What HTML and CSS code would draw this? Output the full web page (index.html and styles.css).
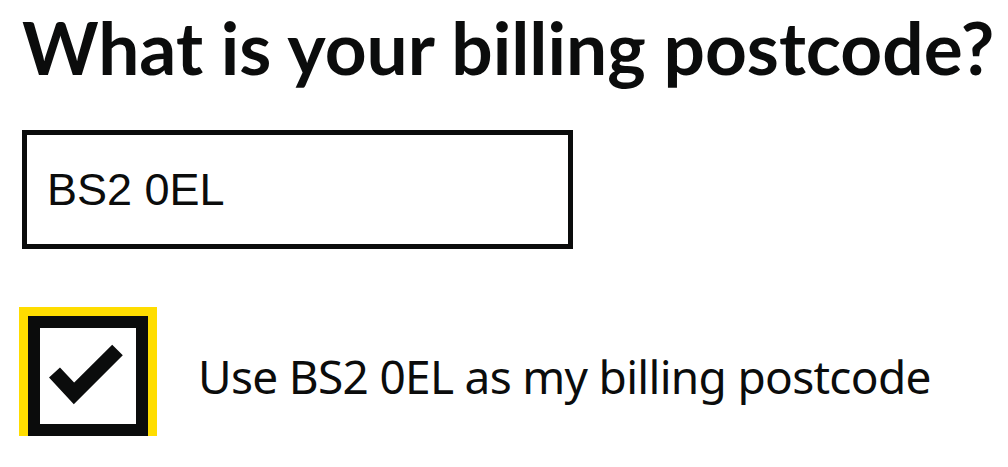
FILE: index.html
```html
<!DOCTYPE html>
<html lang="en">
<head>
<meta charset="utf-8">
<title>Billing postcode</title>
<link rel="stylesheet" href="styles.css">
</head>
<body>
<main class="page">
  <h1 class="heading">What is your billing postcode?</h1>
  <div class="field">
    <input class="text-input" type="text" value="BS2 0EL" aria-label="Billing postcode">
  </div>
  <div class="checkbox-row">
    <span class="checkbox-box" aria-hidden="true">
      <svg class="check" width="96" height="96" viewBox="0 0 96 96">
        <polyline points="14.5,44.5 34,65.4 77.5,22" fill="none" stroke="#0b0c0c" stroke-width="15" stroke-linejoin="miter" stroke-linecap="butt"/>
      </svg>
    </span>
    <span class="checkbox-label">Use BS2 0EL as my billing postcode</span>
  </div>
</main>
</body>
</html>
```
FILE: styles.css
```css
html, body {
  margin: 0;
  padding: 0;
  background: #ffffff;
  color: #0b0c0c;
}

.page {
  padding: 0 0 0 22px;
  display: flex;
  flex-direction: column;
}

.heading {
  margin: 0;
  padding-top: 4px;
  font-family: Lato, "Noto Sans", "Liberation Sans", sans-serif;
  font-weight: 700;
  font-size: 73px;
  line-height: 86px;
  letter-spacing: 0;
  white-space: nowrap;
}

.field {
  margin-top: 40px;
}

.text-input {
  display: block;
  box-sizing: border-box;
  width: 551px;
  height: 119px;
  margin: 0;
  border: 5px solid #0b0c0c;
  border-radius: 0;
  padding: 0 0 0 20px;
  font-family: "Liberation Sans", Arial, sans-serif;
  font-size: 45px;
  color: #0b0c0c;
  background: #ffffff;
  outline: none;
}

.checkbox-row {
  margin-top: 67px;
  margin-left: 6px;
  display: flex;
  align-items: center;
  gap: 50px;
}

.checkbox-box {
  box-sizing: border-box;
  width: 120px;
  height: 120px;
  border: 12px solid #0b0c0c;
  box-shadow: 0 0 0 9px #ffdd00;
  background: #ffffff;
  flex: none;
  display: block;
}

.check {
  display: block;
}

.checkbox-label {
  font-family: "Noto Sans", "Liberation Sans", sans-serif;
  font-size: 46px;
  line-height: 60px;
  letter-spacing: -0.7px;
  color: #0b0c0c;
  white-space: nowrap;
}
```
